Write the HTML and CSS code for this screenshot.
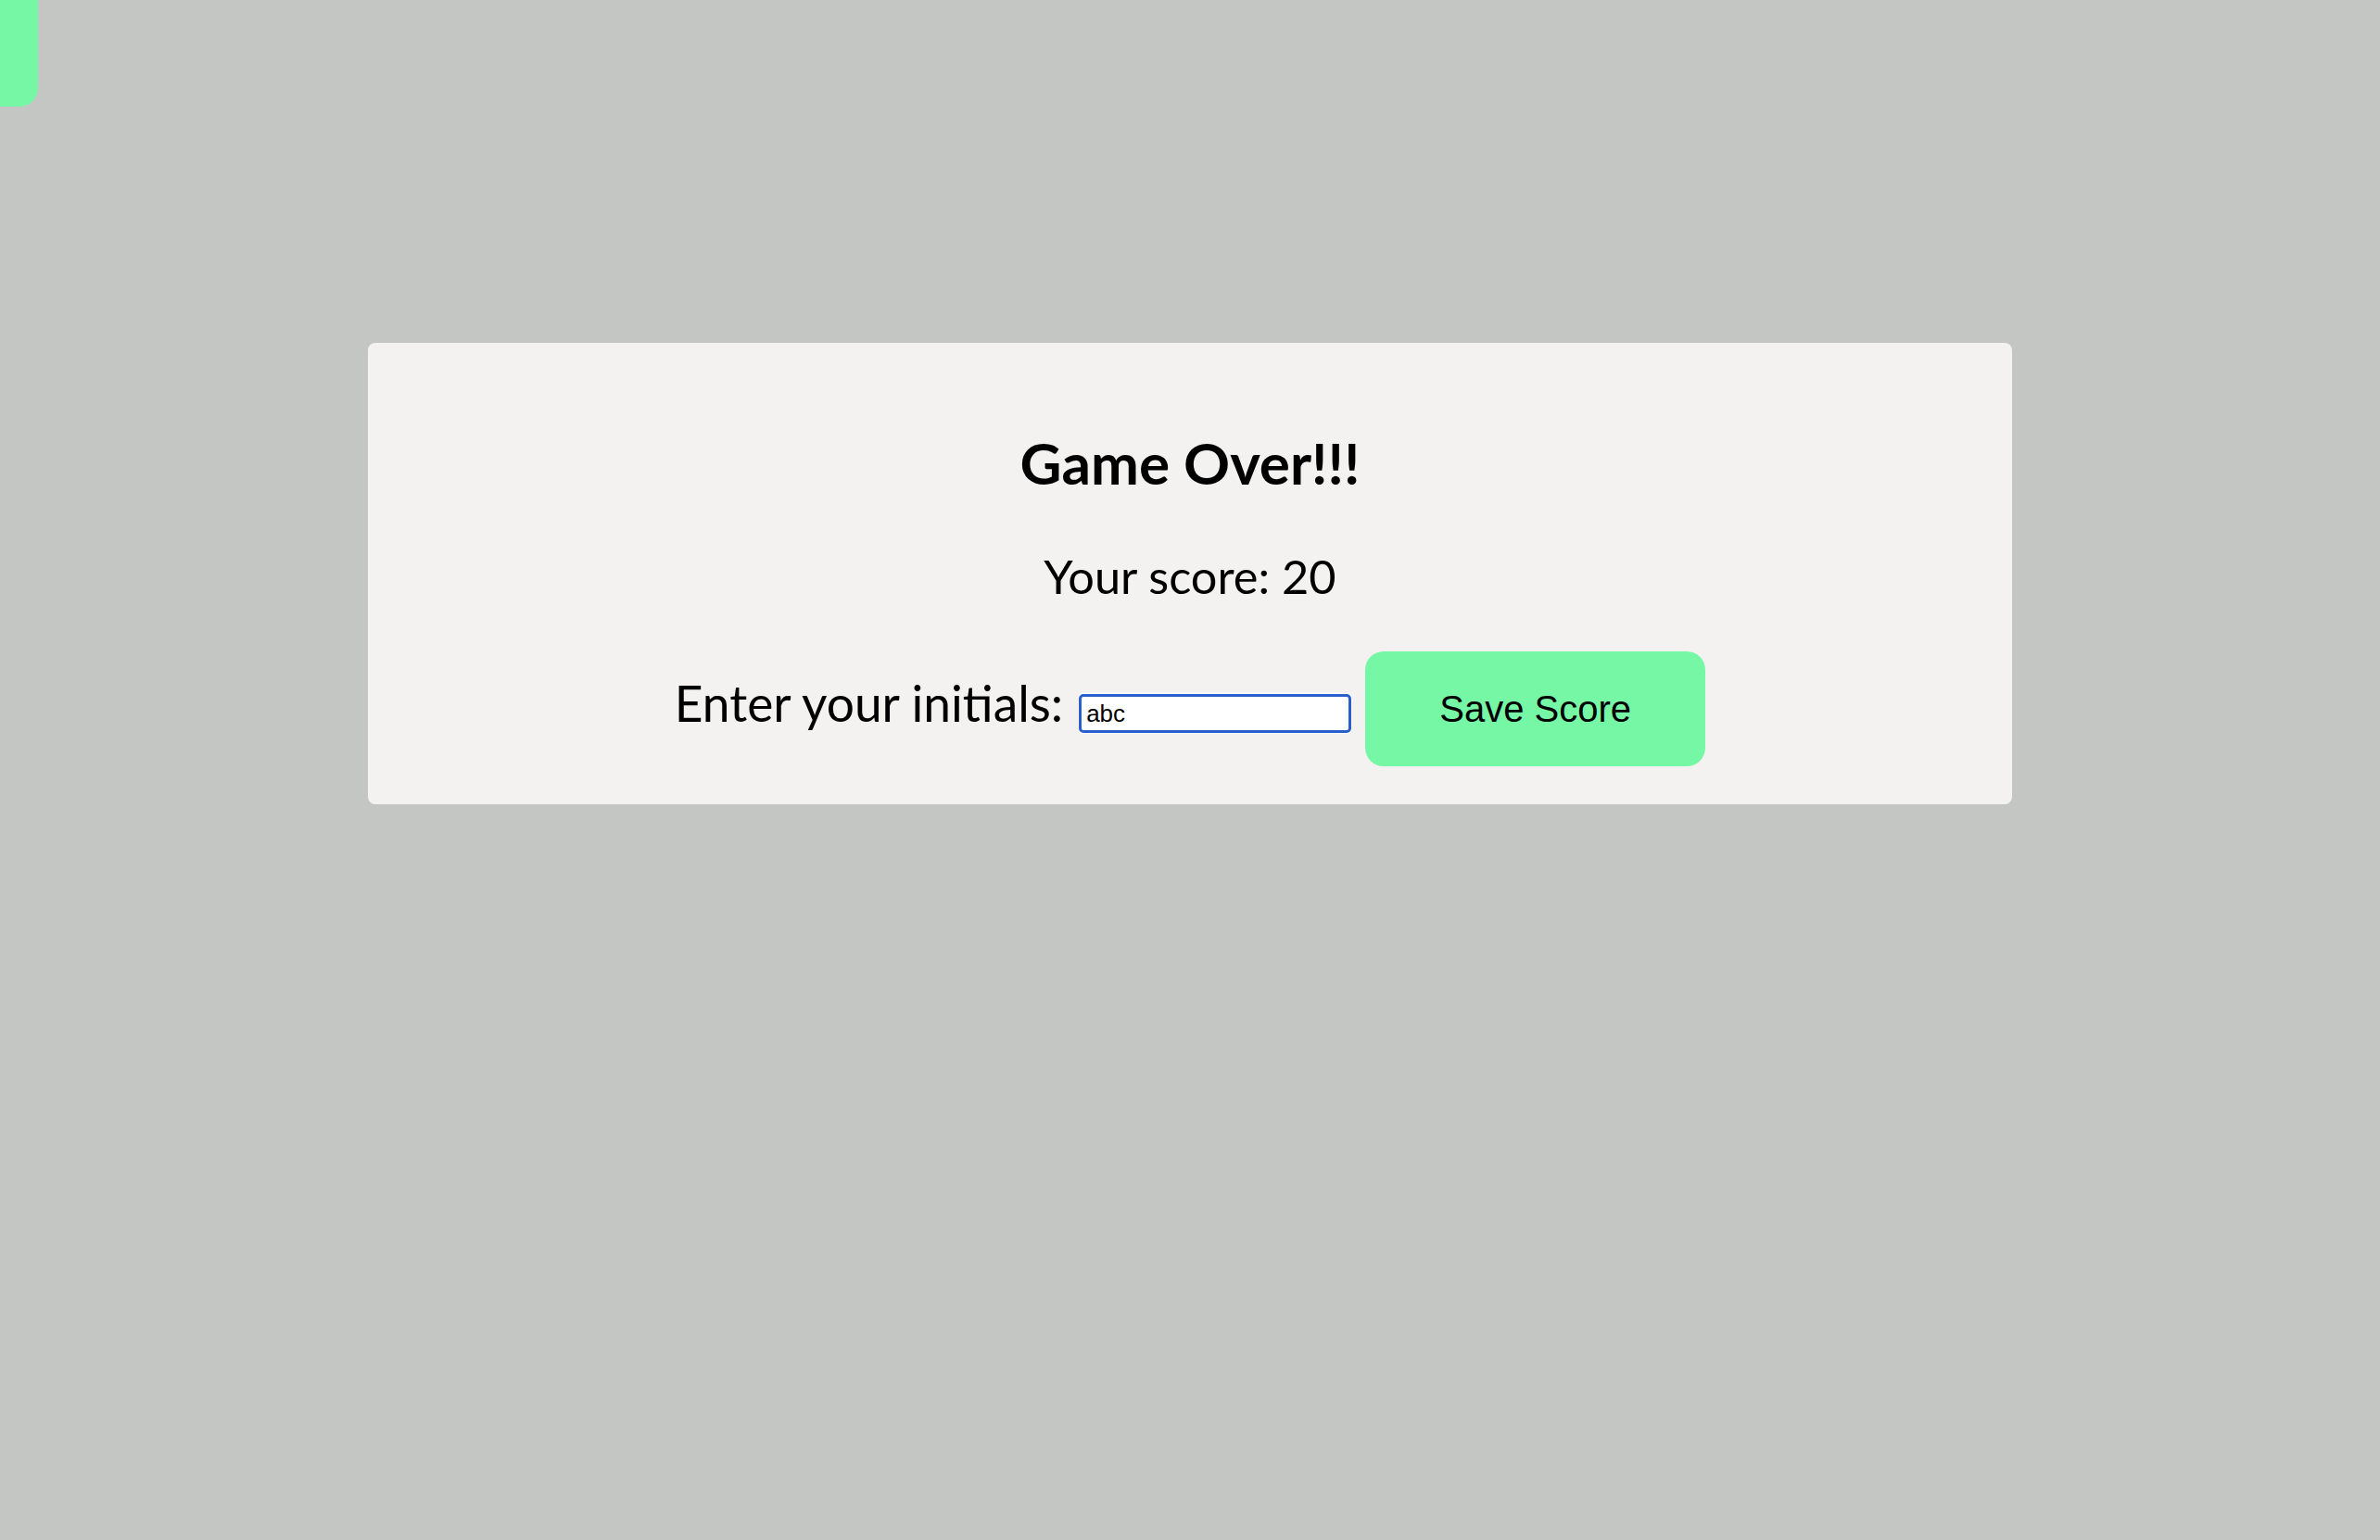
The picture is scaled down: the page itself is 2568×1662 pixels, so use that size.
FILE: index.html
```html
<!DOCTYPE html>
<html lang="en">
<head>
<meta charset="utf-8">
<title>Game Over</title>
<link rel="stylesheet" href="styles.css">
</head>
<body>
<div class="corner-tab"></div>
<main class="card">
  <h1 class="title">Game Over!!!</h1>
  <p class="score">Your score: 20</p>
  <form class="save-row">
    <label class="save-label" for="initials">Enter your initials:</label>
    <input class="initials" id="initials" type="text" value="abc">
    <button class="save-btn" type="button">Save Score</button>
  </form>
</main>
</body>
</html>
```
FILE: styles.css
```css
html, body {
  margin: 0;
  padding: 0;
}
body {
  background: #c4c6c3;
  font-family: "Lato", "Open Sans", sans-serif;
  color: #000;
  min-height: 1662px;
  position: relative;
  overflow: hidden;
}
.corner-tab {
  position: absolute;
  left: -30px;
  top: -20px;
  width: 71px;
  height: 135px;
  background: #76f7a5;
  border-radius: 20px;
}
.card {
  width: 1774px;
  margin: 370px auto 0;
  box-sizing: border-box;
  padding: 93px 0 41px;
  background: #f3f2f0;
  border-radius: 8px;
  display: flex;
  flex-direction: column;
  align-items: center;
}
.title {
  margin: 0;
  font-size: 62px;
  line-height: 72px;
  font-weight: 700;
}
.score {
  margin: 56px 0 0;
  font-size: 50.5px;
  line-height: 62px;
  font-weight: 400;
}
.save-row {
  margin: 50px 0 0;
  display: flex;
  align-items: baseline;
  justify-content: center;
}
.save-label {
  font-size: 53.3px;
  line-height: 62px;
  margin-right: 17px;
}
.initials {
  width: 294px;
  height: 42px;
  box-sizing: border-box;
  padding: 0 5px;
  border: 3px solid #2b5fcc;
  border-radius: 5px;
  box-shadow: 0 0 0 1px #ffffff;
  background: #fff;
  font-family: "Liberation Sans", Arial, sans-serif;
  font-size: 26px;
  color: #000;
  outline: none;
}
.save-btn {
  margin-left: 15px;
  width: 367px;
  height: 124px;
  padding: 0;
  border: none;
  border-radius: 20px;
  background: #76f7a5;
  font-family: "Liberation Sans", Arial, sans-serif;
  font-size: 40px;
  color: #000;
}
```
